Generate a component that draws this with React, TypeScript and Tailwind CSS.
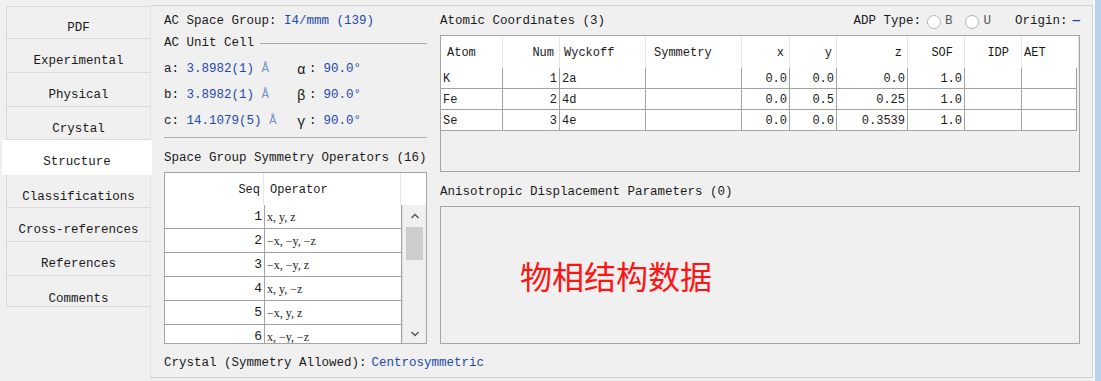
const MONO = "font-['Liberation_Mono','Noto_Sans_CJK_SC',monospace]";

const tabs = [
  { label: "PDF", cls: "h-[33px] border-t pt-[12px]" },
  { label: "Experimental", cls: "h-[34px] pt-[12px]" },
  { label: "Physical", cls: "h-[34px] pt-[12px]" },
  { label: "Crystal", cls: "h-[33px] pt-[12px]" },
  { label: "Structure", cls: "h-[35px] pt-[9px]", active: true },
  { label: "Classifications", cls: "h-[33px] pt-[12px]" },
  { label: "Cross-references", cls: "h-[34px] pt-[12px]" },
  { label: "References", cls: "h-[34px] pt-[12px]" },
  { label: "Comments", cls: "h-[31px] pt-[16px]" },
];

const atomCols = [
  { key: "atom", label: "Atom", w: "w-[62px]", head: "justify-start pl-[6px]", cell: "justify-start pl-[2px]" },
  { key: "num", label: "Num", w: "w-[57px]", head: "justify-end pr-[5px]", cell: "justify-end pr-[2px]" },
  { key: "wy", label: "Wyckoff", w: "w-[86px]", head: "justify-start pl-[4px]", cell: "justify-start pl-[2px]" },
  { key: "sym", label: "Symmetry", w: "w-[96px]", head: "justify-start pl-[8px]", cell: "justify-start pl-[2px]" },
  { key: "x", label: "x", w: "w-[48px]", head: "justify-end pr-[5px]", cell: "justify-end pr-[2px]" },
  { key: "y", label: "y", w: "w-[47px]", head: "justify-end pr-[4px]", cell: "justify-end pr-[2px]" },
  { key: "z", label: "z", w: "w-[71px]", head: "justify-end pr-[5px]", cell: "justify-end pr-[2px]" },
  { key: "sof", label: "SOF", w: "w-[57px]", head: "justify-end pr-[11px]", cell: "justify-end pr-[2px]" },
  { key: "idp", label: "IDP", w: "w-[57px]", head: "justify-end pr-[12px]", cell: "justify-end pr-[2px]" },
  { key: "aet", label: "AET", w: "w-[55px]", head: "justify-start pl-[2px]", cell: "justify-start pl-[2px]" },
];

const atoms: Record<string, string>[] = [
  { atom: "K", num: "1", wy: "2a", sym: "", x: "0.0", y: "0.0", z: "0.0", sof: "1.0", idp: "", aet: "" },
  { atom: "Fe", num: "2", wy: "4d", sym: "", x: "0.0", y: "0.5", z: "0.25", sof: "1.0", idp: "", aet: "" },
  { atom: "Se", num: "3", wy: "4e", sym: "", x: "0.0", y: "0.0", z: "0.3539", sof: "1.0", idp: "", aet: "" },
];

const operators = ["x, y, z", "−x, −y, −z", "−x, −y, z", "x, y, −z", "−x, y, z", "x, −y, −z"];

const cell = [
  { k: "a", v: "3.8982(1)", g: "α" },
  { k: "b", v: "3.8982(1)", g: "β" },
  { k: "c", v: "14.1079(5)", g: "γ" },
];

function Chevron({ up }: { up?: boolean }) {
  return (
    <svg width="10" height="8" viewBox="0 0 10 8">
      <path d={up ? "M1.5 6 L5 2.5 L8.5 6" : "M1.5 2 L5 5.5 L8.5 2"} fill="none" stroke="#555" strokeWidth="1.4" />
    </svg>
  );
}

function Radio() {
  return <span className="inline-block w-[14px] h-[14px] rounded-full border border-[#b4b4b4] bg-white" />;
}

export default function App() {
  return (
    <div className={`flex w-[1101px] h-[381px] bg-[#f0f0f0] overflow-hidden text-[12.5px] leading-none text-[#1a1a1a] ${MONO}`}>
      {/* tabs */}
      <div className="w-[150px] shrink-0 pt-[6px] flex flex-col">
        {tabs.map((t) =>
          t.active ? (
            <div key={t.label} className={`${t.cls} ml-[2px] w-[150px] relative z-10 bg-white flex items-center justify-center`}>
              {t.label}
            </div>
          ) : (
            <div
              key={t.label}
              className={`${t.cls} ml-[6px] w-[144px] border-b border-l border-[#d9d9d9] flex items-center justify-center`}
            >
              {t.label}
            </div>
          )
        )}
      </div>

      {/* panel */}
      <div className="w-[943px] shrink-0 mt-[5px] h-[373px] border border-[#d2d2d2] border-l-[#e2e2e2] flex pl-[13px]">
        {/* left side */}
        <div className="w-[263px] shrink-0 flex flex-col pt-[3px]">
          <div className="h-[24px] flex items-center pt-[1px]">
            AC Space Group: <span className="text-[#1d4aa8] ml-[7.5px]">I4/mmm (139)</span>
          </div>
          <div className="h-[20px] flex items-center">
            <span>AC Unit Cell</span>
            <div className="flex-1 h-px bg-[#a9a9a9] ml-[6px]" />
          </div>
          <div className="mt-[3px] flex flex-col">
            {cell.map((c) => (
              <div key={c.k} className="h-[26px] flex items-center pt-[1px]">
                <div className="w-[133px] flex items-center">
                  <span>{c.k}:</span>
                  <span className="text-[#1d4aa8] ml-[7.5px]">{c.v}</span>
                  <span className="text-[#7d97d2] ml-[7.5px]">Å</span>
                </div>
                <span className="inline-block w-[12px] text-[14px]">{c.g}</span>
                <span>:</span>
                <span className="text-[#1d4aa8] ml-[7px]">90.0°</span>
              </div>
            ))}
          </div>
          <div className="mt-[3px] h-px bg-[#b1b1b1]" />
          <div className="mt-[7px] h-[24px] flex items-center pt-[2px]">Space Group Symmetry Operators (16)</div>

          <div className="mt-[3px] h-[172px] border border-[#a5a5a5] flex flex-col text-[12px]">
            <div className="h-[32px] shrink-0 flex bg-white">
              <div className="w-[99px] border-r border-[#e6e6e6] flex items-center justify-end pr-[3px] pt-[2px]">Seq</div>
              <div className="w-[137px] border-r border-[#e6e6e6] flex items-center pl-[6px] pt-[2px]">Operator</div>
              <div className="flex-1" />
            </div>
            <div className="flex-1 flex overflow-hidden">
              <div className="w-[237px] flex flex-col overflow-hidden">
                {operators.map((op, i) => (
                  <div key={i} className="h-[24px] shrink-0 flex bg-white">
                    <div className="w-[100px] border-r border-b border-[#a3a3a3] flex items-center justify-end pr-[2px] text-[13px]">
                      {i + 1}
                    </div>
                    <div className="w-[137px] border-r border-b border-[#a3a3a3] flex items-center pl-[2px] font-['Liberation_Serif',serif] text-[12px]">
                      {op}
                    </div>
                  </div>
                ))}
              </div>
              <div className="flex-1 flex flex-col items-center bg-[#f0f0f0] border-l border-[#e0e0e0]">
                <div className="h-[22px] flex items-center">
                  <Chevron up />
                </div>
                <div className="w-[17px] h-[33px] bg-[#cdcdcd]" />
                <div className="flex-1" />
                <div className="h-[18px] flex items-center">
                  <Chevron />
                </div>
              </div>
            </div>
          </div>

          <div className="mt-[6px] h-[24px] flex items-center whitespace-nowrap pt-[2px]">
            Crystal (Symmetry Allowed):<span className="text-[#1d4aa8] ml-[5px]">Centrosymmetric</span>
          </div>
        </div>

        {/* right side */}
        <div className="w-[640px] shrink-0 ml-[13px] flex flex-col pt-[3px]">
          <div className="h-[24px] flex items-center justify-between pt-[1px]">
            <span>Atomic Coordinates (3)</span>
            <div className="flex items-center">
              <span>ADP Type:</span>
              <span className="ml-[6px] flex"><Radio /></span>
              <span className="ml-[4px] text-[#555]">B</span>
              <span className="ml-[13px] flex"><Radio /></span>
              <span className="ml-[4px] text-[#555]">U</span>
              <span className="ml-[24px]">Origin:</span>
              <span className="ml-[5px] text-[#1d4aa8] font-bold">—</span>
            </div>
          </div>

          <div className="mt-[2px] h-[137px] border border-[#a5a5a5] flex flex-col text-[12px]">
            <div className="h-[32px] shrink-0 flex bg-white">
              {atomCols.map((c, i) => (
                <div
                  key={c.key}
                  className={`${i === atomCols.length - 1 ? "flex-1" : c.w} ${c.head} border-r border-[#e6e6e6] flex items-center pt-[1px]`}
                >
                  {c.label}
                </div>
              ))}
            </div>
            {atoms.map((r, ri) => (
              <div key={ri} className="h-[21px] shrink-0 flex">
                {atomCols.map((c) => (
                  <div
                    key={c.key}
                    className={`${c.w} ${c.cell} bg-white border-r border-b border-[#a3a3a3] flex items-center pt-[1px]`}
                  >
                    {r[c.key]}
                  </div>
                ))}
              </div>
            ))}
          </div>

          <div className="mt-[7px] h-[24px] flex items-center pt-[3px]">Anisotropic Displacement Parameters (0)</div>
          <div className="mt-[3px] h-[138px] border border-[#a5a5a5] flex items-center pl-[79px]">
            <span className="font-['Noto_Sans_CJK_SC',sans-serif] text-[32px] text-[#ff1414]">物相结构数据</span>
          </div>
        </div>
      </div>

      {/* window edge */}
      <div className="w-[2px] shrink-0 bg-[#f8f8f8]" />
      <div className="flex-1 bg-[#bad2ec]" />
    </div>
  );
}
